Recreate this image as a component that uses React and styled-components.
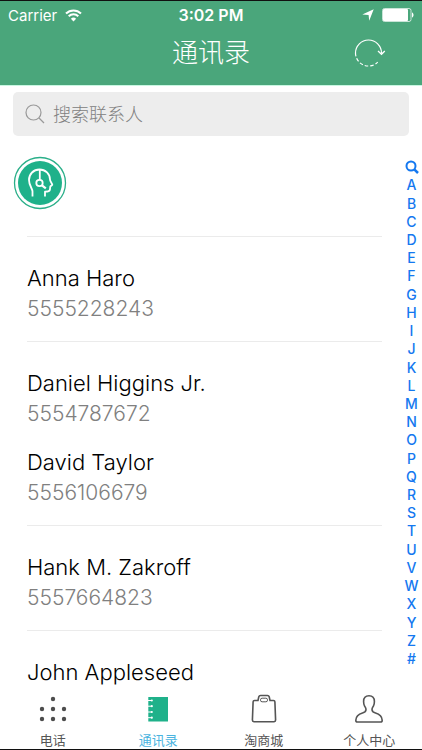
import { Fragment } from "react";
import styled, { createGlobalStyle } from "styled-components";

const GlobalStyle = createGlobalStyle`
  * {
    box-sizing: border-box;
  }

  body {
    margin: 0;
    background: #ffffff;
    font-family: Inter, "Noto Sans CJK SC", sans-serif;
  }

  button,
  input {
    font-family: inherit;
  }
`;

const Screen = styled.div`
  display: flex;
  flex-direction: column;
  height: 100vh;
  border-top: 1px solid #101010;
  border-bottom: 1px solid #101010;
  overflow: hidden;
`;

const Header = styled.header`
  flex: none;
  background: #4aa67b;
  color: #ffffff;
  border-bottom: 1px solid #c9f7e2;
`;

const StatusBar = styled.div`
  display: grid;
  grid-template-columns: 1fr auto 1fr;
  align-items: center;
  height: 28px;
  padding: 0 8px;
  font-size: 15px;
`;

const StatusGroup = styled.div`
  display: flex;
  align-items: center;
  justify-content: ${({ $end }) => ($end ? "flex-end" : "flex-start")};
  gap: 8px;
`;

const Time = styled.span`
  font-size: 16px;
  font-weight: 600;
`;

const TitleBar = styled.div`
  display: grid;
  grid-template-columns: 1fr auto 1fr;
  align-items: center;
  height: 56px;
  padding: 0 36px 8px;
`;

const Title = styled.h1`
  grid-column: 2;
  margin: 0;
  font-size: 26px;
  font-weight: 300;
  line-height: 36px;
`;

const RefreshButton = styled.button`
  justify-self: end;
  display: flex;
  padding: 0;
  border: 0;
  background: none;
  color: inherit;
  cursor: pointer;
`;

const SearchBox = styled.label`
  flex: none;
  display: flex;
  align-items: center;
  gap: 8px;
  height: 44px;
  margin: 6px 13px 0;
  padding: 0 12px;
  border-radius: 5px;
  background: #ededed;
  color: #999999;
`;

const SearchInput = styled.input`
  flex: 1;
  min-width: 0;
  padding: 0;
  border: 0;
  outline: 0;
  background: none;
  color: #333333;
  font-size: 18px;
  font-weight: 300;

  &::placeholder {
    color: #808080;
    opacity: 1;
  }
`;

const Main = styled.main`
  flex: 1;
  display: flex;
  min-height: 0;
`;

const ContactList = styled.div`
  flex: 1;
  min-width: 0;
  padding: 20px 19px 0 13px;
  overflow-y: auto;
  scrollbar-width: none;
`;

const ServiceButton = styled.button`
  display: flex;
  margin: 0 0 26px;
  padding: 0;
  border: 0;
  border-radius: 50%;
  background: none;
  cursor: pointer;
`;

const Section = styled.ul`
  margin: 0 0 0 14px;
  padding: 25px 0 0;
  border-top: 1px solid #ebebeb;
  list-style: none;
`;

const Contact = styled.li`
  height: 79px;
  font-weight: 300;
`;

const Name = styled.div`
  color: #000000;
  font-size: 22px;
  line-height: 32px;
`;

const Phone = styled.div`
  color: #808080;
  font-size: 21px;
  line-height: 30px;
`;

const LetterIndex = styled.nav`
  flex: none;
  display: flex;
  flex-direction: column;
  width: 21px;
  padding: 22px 0 18px;
`;

const Letter = styled.a`
  flex: 1;
  display: flex;
  align-items: center;
  justify-content: center;
  min-height: 0;
  color: #1478f0;
  font-size: 14px;
  font-weight: 500;
  line-height: 18px;
  text-decoration: none;
`;

const TabBar = styled.nav`
  flex: none;
  display: grid;
  grid-template-columns: repeat(4, 1fr);
  height: 63px;
  background: #ffffff;
`;

const Tab = styled.a`
  display: flex;
  flex-direction: column;
  align-items: center;
  gap: 5px;
  padding-top: 7px;
  color: ${({ $active }) => ($active ? "#4bb4e0" : "#555555")};
  font-size: 13px;
  line-height: 20px;
  text-decoration: none;
`;

const WifiIcon = () => (
  <svg width="17" height="13" viewBox="0 0 17 13" fill="none" aria-hidden="true">
    <path d="M1 4.5a10.6 10.6 0 0 1 15 0" stroke="currentColor" strokeWidth="2" />
    <path d="M3.7 7.3a6.8 6.8 0 0 1 9.6 0" stroke="currentColor" strokeWidth="2" />
    <path d="M8.5 12.5 5.9 9.8a3.8 3.8 0 0 1 5.2 0Z" fill="currentColor" />
  </svg>
);

const LocationIcon = () => (
  <svg width="12" height="12" viewBox="0 0 12 12" aria-hidden="true">
    <path d="M11.7.3 7.2 11.8 6.6 5.9.3 5.4Z" fill="currentColor" />
  </svg>
);

const BatteryIcon = () => (
  <svg width="32" height="14" viewBox="0 0 32 14" fill="none" aria-hidden="true">
    <rect x=".5" y=".5" width="28.5" height="13" rx="2" stroke="currentColor" strokeOpacity=".7" />
    <rect x="1" y="1" width="25" height="12" rx="1" fill="currentColor" />
    <path d="M30 4.5c2 .5 2 4.5 0 5Z" fill="currentColor" />
  </svg>
);

const RefreshIcon = () => (
  <svg width="32" height="30" viewBox="0 0 32 30" fill="none" stroke="currentColor" aria-hidden="true">
    <path d="M1.5 15a13 13 0 0 1 26 0" strokeWidth="1.2" />
    <path d="m24 13 3.5 3.3 3.3-3.3" strokeWidth="1.3" />
    <path d="M1.5 15a13 13 0 0 0 22.2 9.2" strokeWidth="1.2" strokeDasharray="3.5 2" />
  </svg>
);

const SearchIcon = () => (
  <svg width="20" height="20" viewBox="0 0 20 20" fill="none" stroke="currentColor" aria-hidden="true">
    <circle cx="8.5" cy="8.5" r="7.5" strokeWidth="1.2" />
    <path d="m14 14 5 5" strokeWidth="1.3" />
  </svg>
);

const IndexSearchIcon = () => (
  <svg width="14" height="14" viewBox="0 0 14 14" fill="none" stroke="currentColor" aria-hidden="true">
    <circle cx="6" cy="6" r="4.5" strokeWidth="2" />
    <path d="m9.3 9.3 3.7 3.7" strokeWidth="2.5" />
  </svg>
);

const HeadsetIcon = () => (
  <svg width="54" height="54" viewBox="0 0 54 54" fill="none" aria-hidden="true">
    <circle cx="27" cy="27" r="25.5" stroke="#2aaf89" strokeWidth="1.3" />
    <circle cx="27" cy="27" r="22" fill="#1fb18a" />
    <g stroke="#ffffff" strokeWidth="1.8" strokeLinejoin="round">
      <path d="M19.5 40.5v-5c0-3-3.5-6-3.5-11.5 0-6 4.5-10.5 10.500-10.500S37 18 37 23.500c0 2 2 3.500 2.300 5.300-.3 1-1.800 1-2 1.700l-.4 3.300c-.3 1.500-1.300 1.900-4.900 1.900v4.800" />
      <path d="M26.8 13.8v10" />
      <circle cx="26.5" cy="27" r="3.2" />
      <path d="m29 29.3 3.8 3" strokeWidth="2.2" />
    </g>
  </svg>
);

const DialIcon = () => (
  <svg width="32" height="32" viewBox="0 0 32 32" fill="#4d4d4d" aria-hidden="true">
    {[[16, 6], [5, 16], [16, 16], [27, 16], [5, 26], [16, 26], [27, 26]].map(([x, y]) => (
      <circle key={`${x}-${y}`} cx={x} cy={y} r="2.2" />
    ))}
  </svg>
);

const BookIcon = () => (
  <svg width="32" height="32" viewBox="0 0 32 32" fill="none" aria-hidden="true">
    <rect x="6.3" y="4" width="19.7" height="24.5" fill="#1fb18a" />
    {[7.5, 13.2, 19, 24.7].map((y) => (
      <Fragment key={y}>
        <path d={`M5.5 ${y}h4.5`} stroke="#ffffff" strokeWidth="1" />
        <circle cx="9.8" cy={y} r="1.1" fill="#ffffff" />
      </Fragment>
    ))}
  </svg>
);

const BagIcon = () => (
  <svg width="32" height="32" viewBox="0 0 32 32" fill="none" stroke="#555555" aria-hidden="true">
    <path
      d="M6.500 7.500h3.500l.8-3.700q.4-1.300 1.700-1.300h7q1.300 0 1.700 1.300l.8 3.700h3.500q1.300 0 1.400 1.300l.7 18.300q0 1.600-1.500 1.600H5.900q-1.500 0-1.500-1.600l.7-18.300q.1-1.300 1.400-1.300Z"
      strokeWidth="1.6"
    />
    <rect x="12.5" y="5.2" width="7" height="3.6" rx="1.6" strokeWidth="1" />
  </svg>
);

const UserIcon = () => (
  <svg width="32" height="32" viewBox="0 0 32 32" fill="none" stroke="#555555" aria-hidden="true">
    <path
      d="M16 2.800c-3.600 0-5.400 2.300-5.400 5.700 0 2.200.3 3.200.9 4.300.8 1.500 1.500 2 1.500 3.700 0 2-.8 2.800-3.500 3.500-4.500 1.200-6.500 3.300-6.700 7.200 0 1.200.5 1.800 1.700 1.800h23c1.200 0 1.700-.6 1.700-1.800-.2-3.900-2.200-6-6.700-7.200-2.700-.7-3.500-1.500-3.500-3.500 0-1.700.7-2.200 1.500-3.700.6-1.100.9-2.100.9-4.300 0-3.400-1.800-5.700-5.400-5.700Z"
      strokeWidth="1.6"
    />
  </svg>
);

const sections = [
  { letter: "A", contacts: [{ name: "Anna Haro", phone: "5555228243" }] },
  {
    letter: "D",
    contacts: [
      { name: "Daniel Higgins Jr.", phone: "5554787672" },
      { name: "David Taylor", phone: "5556106679" },
    ],
  },
  { letter: "H", contacts: [{ name: "Hank M. Zakroff", phone: "5557664823" }] },
  { letter: "J", contacts: [{ name: "John Appleseed", phone: "" }] },
];

const letters = [..."ABCDEFGHIJKLMNOPQRSTUVWXYZ#"];

const tabs = [
  { label: "电话", href: "#phone", icon: DialIcon },
  { label: "通讯录", href: "#contacts", icon: BookIcon, active: true },
  { label: "淘商城", href: "#mall", icon: BagIcon },
  { label: "个人中心", href: "#profile", icon: UserIcon },
];

export default function App() {
  return (
    <>
      <GlobalStyle />
      <Screen>
        <Header>
          <StatusBar>
            <StatusGroup>
              <span>Carrier</span>
              <WifiIcon />
            </StatusGroup>
            <Time>3:02 PM</Time>
            <StatusGroup $end>
              <LocationIcon />
              <BatteryIcon />
            </StatusGroup>
          </StatusBar>
          <TitleBar>
            <Title>通讯录</Title>
            <RefreshButton type="button" aria-label="刷新">
              <RefreshIcon />
            </RefreshButton>
          </TitleBar>
        </Header>

        <SearchBox>
          <SearchIcon />
          <SearchInput type="text" placeholder="搜索联系人" aria-label="搜索联系人" />
        </SearchBox>

        <Main>
          <ContactList>
            <ServiceButton type="button" aria-label="客服">
              <HeadsetIcon />
            </ServiceButton>
            {sections.map(({ letter, contacts }) => (
              <Section key={letter} id={letter}>
                {contacts.map(({ name, phone }) => (
                  <Contact key={name}>
                    <Name>{name}</Name>
                    <Phone>{phone}</Phone>
                  </Contact>
                ))}
              </Section>
            ))}
          </ContactList>

          <LetterIndex aria-label="索引">
            <Letter href="#search" aria-label="搜索">
              <IndexSearchIcon />
            </Letter>
            {letters.map((letter) => (
              <Letter key={letter} href={`#${letter}`}>
                {letter}
              </Letter>
            ))}
          </LetterIndex>
        </Main>

        <TabBar>
          {tabs.map(({ label, href, icon: Icon, active }) => (
            <Tab key={label} href={href} $active={active} aria-current={active ? "page" : undefined}>
              <Icon />
              <span>{label}</span>
            </Tab>
          ))}
        </TabBar>
      </Screen>
    </>
  );
}
